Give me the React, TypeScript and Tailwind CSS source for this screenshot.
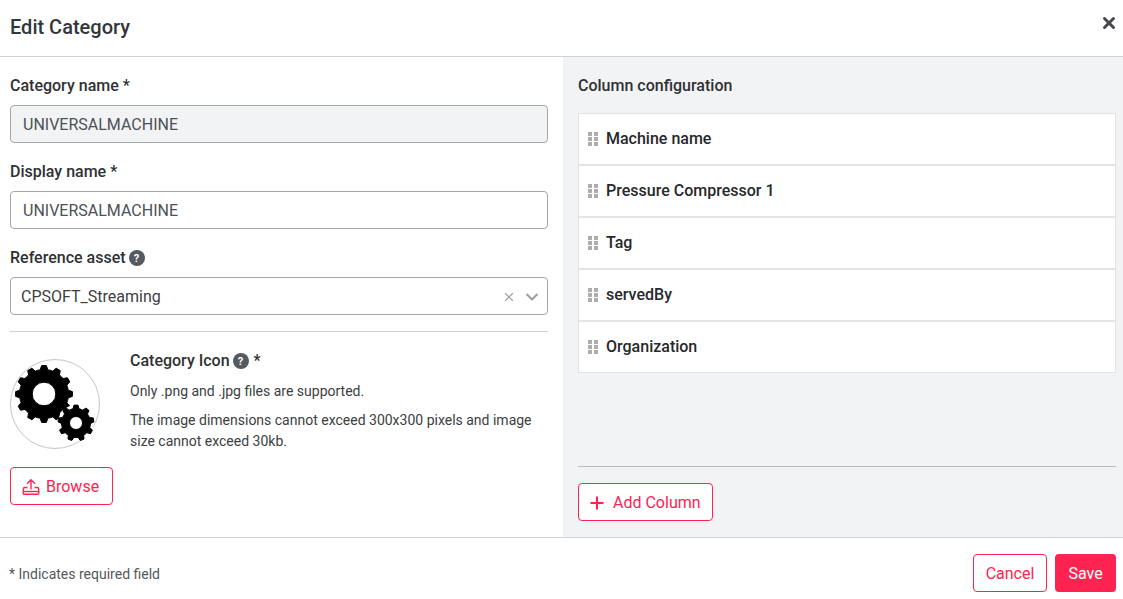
import { Plus, X, ChevronDown } from 'lucide-react'

const COLUMNS = ['Machine name', 'Pressure Compressor 1', 'Tag', 'servedBy', 'Organization']

// builds a toothed wheel with a round hole, drawn with evenodd fill
function gearPath(cx: number, cy: number, outer: number, root: number, hole: number, teeth: number) {
  const pts: string[] = []
  const step = (Math.PI * 2) / teeth
  for (let i = 0; i < teeth; i++) {
    const a = i * step - Math.PI / 2
    const offsets: [number, number][] = [
      [-0.5, root],
      [-0.3, root],
      [-0.16, outer],
      [0.16, outer],
      [0.3, root],
    ]
    offsets.forEach(([o, r]) => {
      const t = a + o * step
      pts.push(`${(cx + r * Math.cos(t)).toFixed(2)} ${(cy + r * Math.sin(t)).toFixed(2)}`)
    })
  }
  return `M${pts.join('L')}Z M${cx - hole} ${cy}a${hole} ${hole} 0 1 0 ${hole * 2} 0a${hole} ${hole} 0 1 0 ${-hole * 2} 0Z`
}

function HelpDot() {
  return (
    <span className="inline-flex h-4 w-4 items-center justify-center rounded-full bg-[#555a60] text-[11px] font-bold leading-none text-white">
      ?
    </span>
  )
}

function DragHandle() {
  return (
    <div className="grid grid-cols-2 gap-x-[2px] gap-y-[1px]">
      {[0, 1, 2, 3, 4, 5].map(i => (
        <span key={i} className="h-[4px] w-[4px] bg-[#adadad]" />
      ))}
    </div>
  )
}

function UploadIcon() {
  return (
    <svg width="18" height="18" viewBox="0 0 18 18" fill="none" stroke="#ff2351" strokeWidth="1.4" strokeLinejoin="round">
      <path d="M9 11.5V2M5 5.8L9 1.8l4 4" />
      <path d="M5.5 9.5H2.5a1 1 0 0 0-1 .9l-.3 3.6v1.2a1 1 0 0 0 1 1h13.6a1 1 0 0 0 1-1V14l-.3-3.6a1 1 0 0 0-1-.9h-3" />
      <path d="M1.5 13.5h15" />
    </svg>
  )
}

export default function App() {
  return (
    <div className="flex h-[599px] w-[1123px] flex-col overflow-hidden bg-white font-['Roboto',sans-serif] text-[#2f3133]">
      <div className="flex h-[57px] shrink-0 items-start justify-between border-b border-[#cfd2d6] pl-[10px] pr-[5px]">
        <h1 className="mt-[14px] text-[20px] font-medium leading-[26px] text-[#33363a]">Edit Category</h1>
        <X className="mt-[14px] h-[18px] w-[18px] text-[#44474b]" strokeWidth={4} />
      </div>

      <div className="flex h-[480px] shrink-0">
        <div className="w-[563px] shrink-0 pl-[10px] pr-[15px] pt-[19px]">
          <label className="block text-[16px] font-medium leading-[20px]">Category name *</label>
          <div className="mt-[9px] flex h-[38px] items-center rounded border border-[#a3a6aa] bg-[#f2f3f5] px-[12px] pt-px text-[16px] text-[#4d5156]">
            UNIVERSALMACHINE
          </div>

          <label className="mt-[19px] block text-[16px] font-medium leading-[20px]">Display name *</label>
          <div className="mt-[9px] flex h-[38px] items-center rounded border border-[#a3a6aa] bg-white px-[12px] pt-px text-[16px] text-[#4d5156]">
            UNIVERSALMACHINE
          </div>

          <label className="mt-[19px] flex items-center gap-[3px] text-[16px] font-medium leading-[20px]">
            Reference asset <HelpDot />
          </label>
          <div className="mt-[9px] flex h-[38px] items-center justify-between rounded border border-[#a3a6aa] bg-white pl-[10px] pr-[5px] pt-px text-[16px] text-[#3c3f43]">
            <span>CPSOFT_Streaming</span>
            <span className="flex items-center gap-[6px] text-[#9a9da1]">
              <X className="h-[14px] w-[14px]" strokeWidth={2} />
              <ChevronDown className="h-[20px] w-[20px]" strokeWidth={2.4} />
            </span>
          </div>

          <div className="mt-[16px] border-t border-[#cfd2d6]" />

          <div className="mt-[27px] flex gap-[30px]">
            <div className="h-[90px] w-[90px] shrink-0 rounded-full border border-[#c4c6c9] bg-white">
              <svg width="88" height="88" viewBox="11 360 88 88">
                <path fillRule="evenodd" d={gearPath(44, 394, 28.5, 24.5, 11.8, 12)} fill="#000" stroke="#000" strokeLinejoin="round" />
                <circle cx="76" cy="423" r="18" fill="#fff" />
                <path fillRule="evenodd" d={gearPath(76, 423, 18, 14.5, 6.5, 9)} fill="#000" stroke="#000" strokeLinejoin="round" />
              </svg>
            </div>
            <div className="-mt-[8px] flex-1">
              <div className="flex items-center text-[16px] font-medium leading-[20px]">
                Category Icon
                <span className="ml-[3px] mr-[5px] flex">
                  <HelpDot />
                </span>
                *
              </div>
              <p className="mt-[10px] text-[14px] leading-[20px] text-[#3b3e42]">Only .png and .jpg files are supported.</p>
              <p className="mt-[9px] text-[14px] leading-[21px] text-[#3b3e42]">
                The image dimensions cannot exceed 300x300 pixels and image size cannot exceed 30kb.
              </p>
            </div>
          </div>

          <button className="mt-[15px] flex h-[38px] w-[103px] items-center gap-[6px] rounded border border-[#ff2351] bg-white pl-[11px] pt-px text-[16px] text-[#ff2351]">
            <UploadIcon />
            Browse
          </button>
        </div>

        <div className="flex flex-1 flex-col bg-[#f2f3f5] pl-[15px] pr-[7px] pt-[19px]">
          <h2 className="text-[16px] font-medium leading-[20px]">Column configuration</h2>
          <div className="mt-[17px] flex h-[260px] flex-col">
            {COLUMNS.map(col => (
              <div key={col} className="flex h-[52px] items-center gap-[8px] border border-[#e2e3e5] bg-white pl-[9px]">
                <DragHandle />
                <span className="text-[16px] font-medium text-[#26282b]">{col}</span>
              </div>
            ))}
          </div>
          <div className="mt-[93px] border-t border-[#b9bdc2]" />
          <button className="mt-[16px] flex h-[38px] w-[135px] items-center gap-[6px] rounded border border-[#ff2351] bg-white pl-[8px] pt-px text-[16px] text-[#ff2351]">
            <Plus className="h-[20px] w-[20px]" strokeWidth={2.4} />
            Add Column
          </button>
        </div>
      </div>

      <div className="flex flex-1 items-start justify-between border-t border-[#cfd2d6] pl-[10px] pr-[7px]">
        <span className="-ml-px mt-[27px] text-[14px] leading-[18px] text-[#55585c]">* Indicates required field</span>
        <div className="mt-[16px] flex gap-[8px]">
          <button className="h-[38px] w-[74px] rounded border border-[#ff2351] bg-white pt-px text-[16px] text-[#ff2351]">Cancel</button>
          <button className="h-[38px] w-[61px] rounded bg-[#ff2351] pt-px text-[16px] text-white">Save</button>
        </div>
      </div>
    </div>
  )
}
